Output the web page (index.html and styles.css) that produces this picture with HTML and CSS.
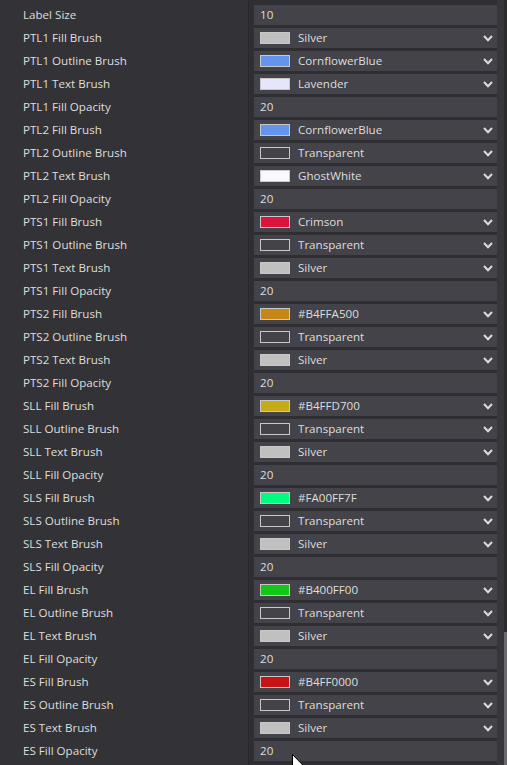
FILE: index.html
```html
<!DOCTYPE html>
<html>
<head>
<meta charset="utf-8">
<link rel="stylesheet" href="styles.css">
</head>
<body>
<div class="grid">
  <div class="label">Label Size</div><div class="val"><span class="txt">10</span></div>

  <div class="label">PTL1 Fill Brush</div><div class="val"><span class="sw" style="background:#c0c0c0"></span><span class="txt">Silver</span><svg class="chev" width="10" height="7" viewBox="0 0 10 7"><path d="M1 1 L5 5.2 L9 1" fill="none" stroke="#dcdcdc" stroke-width="2"/></svg></div>
  <div class="label">PTL1 Outline Brush</div><div class="val"><span class="sw" style="background:#6495ed"></span><span class="txt">CornflowerBlue</span><svg class="chev" width="10" height="7" viewBox="0 0 10 7"><path d="M1 1 L5 5.2 L9 1" fill="none" stroke="#dcdcdc" stroke-width="2"/></svg></div>
  <div class="label">PTL1 Text Brush</div><div class="val"><span class="sw" style="background:#e6e6fa"></span><span class="txt">Lavender</span><svg class="chev" width="10" height="7" viewBox="0 0 10 7"><path d="M1 1 L5 5.2 L9 1" fill="none" stroke="#dcdcdc" stroke-width="2"/></svg></div>
  <div class="label">PTL1 Fill Opacity</div><div class="val"><span class="txt">20</span></div>

  <div class="label">PTL2 Fill Brush</div><div class="val"><span class="sw" style="background:#6495ed"></span><span class="txt">CornflowerBlue</span><svg class="chev" width="10" height="7" viewBox="0 0 10 7"><path d="M1 1 L5 5.2 L9 1" fill="none" stroke="#dcdcdc" stroke-width="2"/></svg></div>
  <div class="label">PTL2 Outline Brush</div><div class="val"><span class="sw"></span><span class="txt">Transparent</span><svg class="chev" width="10" height="7" viewBox="0 0 10 7"><path d="M1 1 L5 5.2 L9 1" fill="none" stroke="#dcdcdc" stroke-width="2"/></svg></div>
  <div class="label">PTL2 Text Brush</div><div class="val"><span class="sw" style="background:#f8f8ff"></span><span class="txt">GhostWhite</span><svg class="chev" width="10" height="7" viewBox="0 0 10 7"><path d="M1 1 L5 5.2 L9 1" fill="none" stroke="#dcdcdc" stroke-width="2"/></svg></div>
  <div class="label">PTL2 Fill Opacity</div><div class="val"><span class="txt">20</span></div>

  <div class="label">PTS1 Fill Brush</div><div class="val"><span class="sw" style="background:#dc143c"></span><span class="txt">Crimson</span><svg class="chev" width="10" height="7" viewBox="0 0 10 7"><path d="M1 1 L5 5.2 L9 1" fill="none" stroke="#dcdcdc" stroke-width="2"/></svg></div>
  <div class="label">PTS1 Outline Brush</div><div class="val"><span class="sw"></span><span class="txt">Transparent</span><svg class="chev" width="10" height="7" viewBox="0 0 10 7"><path d="M1 1 L5 5.2 L9 1" fill="none" stroke="#dcdcdc" stroke-width="2"/></svg></div>
  <div class="label">PTS1 Text Brush</div><div class="val"><span class="sw" style="background:#c0c0c0"></span><span class="txt">Silver</span><svg class="chev" width="10" height="7" viewBox="0 0 10 7"><path d="M1 1 L5 5.2 L9 1" fill="none" stroke="#dcdcdc" stroke-width="2"/></svg></div>
  <div class="label">PTS1 Fill Opacity</div><div class="val"><span class="txt">20</span></div>

  <div class="label">PTS2 Fill Brush</div><div class="val"><span class="sw" style="background:rgba(255,165,0,0.706)"></span><span class="txt">#B4FFA500</span><svg class="chev" width="10" height="7" viewBox="0 0 10 7"><path d="M1 1 L5 5.2 L9 1" fill="none" stroke="#dcdcdc" stroke-width="2"/></svg></div>
  <div class="label">PTS2 Outline Brush</div><div class="val"><span class="sw"></span><span class="txt">Transparent</span><svg class="chev" width="10" height="7" viewBox="0 0 10 7"><path d="M1 1 L5 5.2 L9 1" fill="none" stroke="#dcdcdc" stroke-width="2"/></svg></div>
  <div class="label">PTS2 Text Brush</div><div class="val"><span class="sw" style="background:#c0c0c0"></span><span class="txt">Silver</span><svg class="chev" width="10" height="7" viewBox="0 0 10 7"><path d="M1 1 L5 5.2 L9 1" fill="none" stroke="#dcdcdc" stroke-width="2"/></svg></div>
  <div class="label">PTS2 Fill Opacity</div><div class="val"><span class="txt">20</span></div>

  <div class="label">SLL Fill Brush</div><div class="val"><span class="sw" style="background:rgba(255,215,0,0.706)"></span><span class="txt">#B4FFD700</span><svg class="chev" width="10" height="7" viewBox="0 0 10 7"><path d="M1 1 L5 5.2 L9 1" fill="none" stroke="#dcdcdc" stroke-width="2"/></svg></div>
  <div class="label">SLL Outline Brush</div><div class="val"><span class="sw"></span><span class="txt">Transparent</span><svg class="chev" width="10" height="7" viewBox="0 0 10 7"><path d="M1 1 L5 5.2 L9 1" fill="none" stroke="#dcdcdc" stroke-width="2"/></svg></div>
  <div class="label">SLL Text Brush</div><div class="val"><span class="sw" style="background:#c0c0c0"></span><span class="txt">Silver</span><svg class="chev" width="10" height="7" viewBox="0 0 10 7"><path d="M1 1 L5 5.2 L9 1" fill="none" stroke="#dcdcdc" stroke-width="2"/></svg></div>
  <div class="label">SLL Fill Opacity</div><div class="val"><span class="txt">20</span></div>

  <div class="label">SLS Fill Brush</div><div class="val"><span class="sw" style="background:rgba(0,255,127,0.98)"></span><span class="txt">#FA00FF7F</span><svg class="chev" width="10" height="7" viewBox="0 0 10 7"><path d="M1 1 L5 5.2 L9 1" fill="none" stroke="#dcdcdc" stroke-width="2"/></svg></div>
  <div class="label">SLS Outline Brush</div><div class="val"><span class="sw"></span><span class="txt">Transparent</span><svg class="chev" width="10" height="7" viewBox="0 0 10 7"><path d="M1 1 L5 5.2 L9 1" fill="none" stroke="#dcdcdc" stroke-width="2"/></svg></div>
  <div class="label">SLS Text Brush</div><div class="val"><span class="sw" style="background:#c0c0c0"></span><span class="txt">Silver</span><svg class="chev" width="10" height="7" viewBox="0 0 10 7"><path d="M1 1 L5 5.2 L9 1" fill="none" stroke="#dcdcdc" stroke-width="2"/></svg></div>
  <div class="label">SLS Fill Opacity</div><div class="val"><span class="txt">20</span></div>

  <div class="label">EL Fill Brush</div><div class="val"><span class="sw" style="background:rgba(0,255,0,0.706)"></span><span class="txt">#B400FF00</span><svg class="chev" width="10" height="7" viewBox="0 0 10 7"><path d="M1 1 L5 5.2 L9 1" fill="none" stroke="#dcdcdc" stroke-width="2"/></svg></div>
  <div class="label">EL Outline Brush</div><div class="val"><span class="sw"></span><span class="txt">Transparent</span><svg class="chev" width="10" height="7" viewBox="0 0 10 7"><path d="M1 1 L5 5.2 L9 1" fill="none" stroke="#dcdcdc" stroke-width="2"/></svg></div>
  <div class="label">EL Text Brush</div><div class="val"><span class="sw" style="background:#c0c0c0"></span><span class="txt">Silver</span><svg class="chev" width="10" height="7" viewBox="0 0 10 7"><path d="M1 1 L5 5.2 L9 1" fill="none" stroke="#dcdcdc" stroke-width="2"/></svg></div>
  <div class="label">EL Fill Opacity</div><div class="val"><span class="txt">20</span></div>

  <div class="label">ES Fill Brush</div><div class="val"><span class="sw" style="background:rgba(255,0,0,0.706)"></span><span class="txt">#B4FF0000</span><svg class="chev" width="10" height="7" viewBox="0 0 10 7"><path d="M1 1 L5 5.2 L9 1" fill="none" stroke="#dcdcdc" stroke-width="2"/></svg></div>
  <div class="label">ES Outline Brush</div><div class="val"><span class="sw"></span><span class="txt">Transparent</span><svg class="chev" width="10" height="7" viewBox="0 0 10 7"><path d="M1 1 L5 5.2 L9 1" fill="none" stroke="#dcdcdc" stroke-width="2"/></svg></div>
  <div class="label">ES Text Brush</div><div class="val"><span class="sw" style="background:#c0c0c0"></span><span class="txt">Silver</span><svg class="chev" width="10" height="7" viewBox="0 0 10 7"><path d="M1 1 L5 5.2 L9 1" fill="none" stroke="#dcdcdc" stroke-width="2"/></svg></div>
  <div class="label">ES Fill Opacity</div><div class="val"><span class="txt">20</span></div>
</div>
<div class="thumb"></div>
<svg class="cursor" width="13" height="20" viewBox="0 0 13 20"><path d="M0.5 0.5 L0.5 16 L4 12.5 L6.5 18.5 L9 17.5 L6.5 11.8 L11.5 11.8 Z" fill="#fff" stroke="#000" stroke-width="1"/></svg>
</body>
</html>
```

FILE: styles.css
```css
html, body {
  margin: 0;
  padding: 0;
  height: 765px;
  overflow: hidden;
}
body {
  background: linear-gradient(to right,
    #333337 0, #333337 248px,
    #29292c 248px, #29292c 249px,
    #2f2f33 249px, #2f2f33 497px,
    #37373b 497px, #37373b 504px,
    #2c2c2f 504px);
  font-family: "Segoe UI", "Open Sans", "Noto Sans", sans-serif;
  font-size: 11.6px;
  color: #e0e0e0;
  position: relative;
}
.grid {
  display: grid;
  grid-template-columns: 254px 243px;
  grid-auto-rows: 20px;
  row-gap: 3px;
  padding-top: 5px;
}
.label {
  padding-left: 23px;
  line-height: 20px;
  white-space: nowrap;
  color: #dedede;
}
.val {
  background: #434349;
  display: flex;
  align-items: center;
  padding-left: 6px;
  padding-right: 4px;
}
.sw {
  width: 28px;
  height: 10px;
  border: 1px solid #c8c8c8;
  margin-right: 8px;
  flex: none;
}
.txt {
  line-height: 20px;
  color: #dedede;
  flex: 1;
}
.chev {
  flex: none;
  display: block;
}
.thumb {
  position: absolute;
  left: 504px;
  top: 632px;
  width: 3px;
  height: 133px;
  background: #6a6a6e;
}
.cursor {
  position: absolute;
  left: 292px;
  top: 754px;
}
```
